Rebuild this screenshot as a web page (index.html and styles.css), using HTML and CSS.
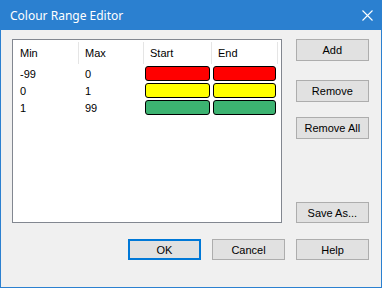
FILE: index.html
```html
<!DOCTYPE html>
<html lang="en">
<head>
  <meta charset="UTF-8" />
  <title>Colour Range Editor</title>
  <link rel="stylesheet" href="styles.css">
</head>
<body>
  <div class="window">
    <div class="titlebar">
      <span class="title">Colour Range Editor</span>
      <svg class="close" width="11" height="11" viewBox="0 0 11 11">
        <path d="M0.5 0.5 L10.5 10.5 M10.5 0.5 L0.5 10.5" stroke="#fff" stroke-width="1.1" fill="none"/>
      </svg>
    </div>

    <div class="content">
      <div class="main">
        <div class="list">
          <table>
            <thead>
              <tr>
                <th class="col-min">Min</th>
                <th class="col-max">Max</th>
                <th class="col-start">Start</th>
                <th class="col-end">End</th>
              </tr>
            </thead>
            <tbody>
              <tr>
                <td>-99</td>
                <td>0</td>
                <td><div class="swatch red"></div></td>
                <td><div class="swatch red"></div></td>
              </tr>
              <tr>
                <td>0</td>
                <td>1</td>
                <td><div class="swatch yellow"></div></td>
                <td><div class="swatch yellow"></div></td>
              </tr>
              <tr>
                <td>1</td>
                <td>99</td>
                <td><div class="swatch green"></div></td>
                <td><div class="swatch green"></div></td>
              </tr>
            </tbody>
          </table>
        </div>

        <div class="side">
          <button class="btn side-btn">Add</button>
          <button class="btn side-btn remove">Remove</button>
          <button class="btn side-btn remove-all">Remove All</button>
          <button class="btn side-btn save">Save As...</button>
        </div>
      </div>

      <div class="actions">
        <button class="btn action default">OK</button>
        <button class="btn action">Cancel</button>
        <button class="btn action">Help</button>
      </div>
    </div>
  </div>
</body>
</html>
```

FILE: styles.css
```css
:root {
  --accent: #2b80d0;
  --face: #f0f0f0;
  --btn: #e1e1e1;
  --btn-border: #adadad;
  --list-border: #828790;
  --sep: #e5e5e5;
}

* {
  box-sizing: border-box;
}

body {
  margin: 0;
  font-family: "Liberation Sans", Arial, sans-serif;
  font-size: 11px;
  color: #000;
}

.window {
  width: 382px;
  height: 288px;
  border: 1px solid var(--accent);
  border-top: none;
  background: var(--face);
  display: flex;
  flex-direction: column;
}

.titlebar {
  height: 30px;
  margin: 0 -1px;
  background: var(--accent);
  display: flex;
  align-items: center;
  justify-content: space-between;
  padding: 0 9px 0 10px;
}

.title {
  color: #fff;
  font-family: "Noto Sans", "Open Sans", sans-serif;
  font-size: 12px;
}

.content {
  padding: 9px 12px 0 11px;
}

.main {
  display: flex;
}

.list {
  width: 272px;
  height: 184px;
  background: #fff;
  border: 1px solid var(--list-border);
}

table {
  border-collapse: collapse;
  table-layout: fixed;
}

th {
  font-weight: normal;
  text-align: left;
  height: 25px;
  padding: 0 6px;
  position: relative;
}

th::after {
  content: "";
  position: absolute;
  right: 0;
  top: 2px;
  bottom: 1px;
  width: 1px;
  background: var(--sep);
}

.col-min { width: 66px; padding-left: 7px; }
.col-max { width: 65px; }
.col-start { width: 68px; }
.col-end { width: 66px; }

td {
  height: 17px;
  padding: 0 6px;
  vertical-align: middle;
}

td:first-child {
  padding-left: 7px;
}

td:nth-child(3),
td:nth-child(4) {
  padding: 1px 2px 1px 1px;
  vertical-align: top;
}

.swatch {
  height: 15px;
  border: 1px solid #000;
  border-radius: 3px;
}

.red { background: #ff0000; }
.yellow { background: #ffff00; }
.green { background: #3cb371; }

.side {
  margin-left: 14px;
  width: 74px;
  display: flex;
  flex-direction: column;
}

.btn {
  font-family: inherit;
  font-size: 11px;
  color: #000;
  background: var(--btn);
  border: 1px solid var(--btn-border);
  padding: 0;
  margin: 0;
}

.side-btn {
  height: 22px;
}

.remove { margin-top: 19px; }
.remove-all { margin-top: 15px; }
.save { margin-top: auto; height: 21px; }

.actions {
  display: flex;
  justify-content: flex-end;
  gap: 11px;
  margin-top: 16px;
}

.action {
  width: 73px;
  height: 21px;
}

.default {
  border: 2px solid #0078d7;
}
```
